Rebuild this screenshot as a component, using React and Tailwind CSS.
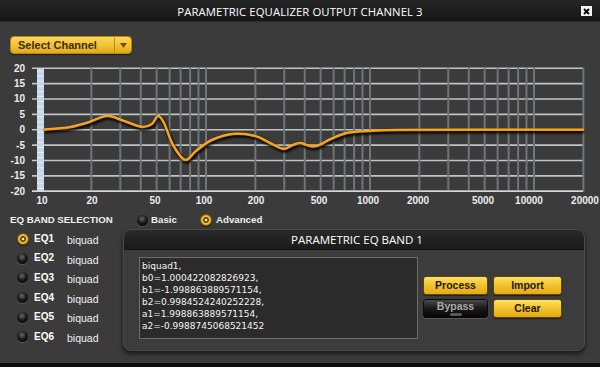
import React from "react";

const X0 = 42;
const DEC = 164;
const fx = (f) => X0 + DEC * Math.log10(f / 10);
const dy = (d) => 129.7 - d * 3.075;

const gridFreqs = [];
for (let f = 20; f <= 100; f += 10) gridFreqs.push(f);
for (let f = 200; f <= 1000; f += 100) gridFreqs.push(f);
for (let f = 2000; f <= 10000; f += 1000) gridFreqs.push(f);
gridFreqs.push(20000);

const dbs = [20, 15, 10, 5, 0, -5, -10, -15, -20];
const xLabels = [
  ["10", 42],
  ["20", 92],
  ["50", 155],
  ["100", 204],
  ["200", 256],
  ["500", 319],
  ["1000", 368],
  ["2000", 418],
  ["5000", 483],
  ["10000", 529],
  ["20000", 585],
];

const pts = [
  [44, 129.5], [68, 127.5], [88, 122.5], [107, 116], [124, 121], [142, 127],
  [152, 124], [158, 116], [164, 123], [173, 145], [185, 160], [196, 151],
  [212, 140], [233, 134], [255, 136], [270, 143], [283, 149], [292, 145.5],
  [300, 143], [308, 145.5], [317, 146], [331, 139], [347, 133], [370, 131],
  [400, 130], [480, 129.8], [583, 129.8],
];

function curvePath(p) {
  let d = `M${p[0][0]},${p[0][1]}`;
  for (let i = 0; i < p.length - 1; i++) {
    const a = p[i - 1] || p[i];
    const b = p[i];
    const c = p[i + 1];
    const e = p[i + 2] || c;
    const c1 = [b[0] + (c[0] - a[0]) / 6, b[1] + (c[1] - a[1]) / 6];
    const c2 = [c[0] - (e[0] - b[0]) / 6, c[1] - (e[1] - b[1]) / 6];
    d += ` C${c1[0].toFixed(2)},${c1[1].toFixed(2)} ${c2[0].toFixed(2)},${c2[1].toFixed(2)} ${c[0]},${c[1]}`;
  }
  return d;
}

function Chart() {
  const d = curvePath(pts);
  return (
    <svg width="600" height="154" viewBox="0 54 600 154" className="block">
      <defs>
        <filter id="sh" x="-5%" y="-20%" width="110%" height="140%">
          <feGaussianBlur stdDeviation="1.2" />
        </filter>
      </defs>
      {dbs.map((v) => (
        <line key={v} x1="32" x2="583" y1={dy(v)} y2={dy(v)} stroke="#c2c4c4" strokeWidth="1.6" />
      ))}
      {gridFreqs.map((f) => (
        <line key={f} x1={fx(f)} x2={fx(f)} y1="68" y2="191.5" stroke="#6e7677" strokeWidth="2" />
      ))}
      <rect x="37" y="68" width="7" height="124" fill="#c6d6e8" />
      {Array.from({ length: 24 }).map((_, i) => (
        <line key={i} x1="37" x2="44" y1={71 + i * 5.1} y2={71 + i * 5.1} stroke="#eef3f8" strokeWidth="0.8" />
      ))}
      <line x1="32" x2="583" y1="191.2" y2="191.2" stroke="#d4d6d6" strokeWidth="1.6" />
      {dbs.map((v) => (
        <text
          key={v}
          x="25"
          y={dy(v)}
          textAnchor="end"
          dominantBaseline="central"
          fill="#ececec"
          fontSize="10"
          fontWeight="700"
          fontFamily="'Liberation Sans', Arial, sans-serif"
        >
          {v}
        </text>
      ))}
      {xLabels.map(([t, x]) => (
        <text
          key={t}
          x={x}
          y="200"
          textAnchor="middle"
          dominantBaseline="central"
          fill="#ececec"
          fontSize="10"
          fontWeight="700"
          fontFamily="'Liberation Sans', Arial, sans-serif"
        >
          {t}
        </text>
      ))}
      <path d={d} fill="none" stroke="#000" strokeOpacity="0.85" strokeWidth="4" transform="translate(1,1.8)" filter="url(#sh)" />
      <path d={d} fill="none" stroke="#f39a12" strokeWidth="2.6" strokeLinecap="round" strokeLinejoin="round" />
      <path d={d} fill="none" stroke="#ffc050" strokeWidth="0.8" strokeOpacity="0.6" transform="translate(0,-0.6)" />
    </svg>
  );
}

function Radio({ on }) {
  return on ? (
    <span className="block w-[12px] h-[12px] rounded-full border border-[#7a5a08] bg-[radial-gradient(circle,#fff1a8_0,#fff1a8_16%,#5d4104_24%,#5d4104_36%,#f6c232_46%,#d8900c_100%)] shadow-[0_1px_1px_rgba(0,0,0,0.6)]" />
  ) : (
    <span className="block w-[11px] h-[11px] rounded-full bg-[radial-gradient(circle_at_45%_35%,#6a6a6a_0,#1a1a1a_45%,#000_100%)] shadow-[0_1px_1px_rgba(255,255,255,0.15)]" />
  );
}

function YBtn({ children, w }) {
  return (
    <div
      className={`${w} h-[19px] flex items-center justify-center rounded-[3px] border border-[#5e4508] bg-[linear-gradient(#fde06a,#f2c22c_50%,#e6aa14)] text-[10.5px] font-bold text-[#1e1602] shadow-[0_1px_1px_rgba(0,0,0,0.5)]`}
    >
      {children}
    </div>
  );
}

export default function App() {
  const eqs = ["EQ1", "EQ2", "EQ3", "EQ4", "EQ5", "EQ6"];
  return (
    <div className="w-[600px] h-[367px] overflow-hidden flex flex-col bg-[#3b3b3b] font-['Liberation_Sans',Arial,sans-serif]">
      {/* title bar */}
      <div className="relative h-[22px] shrink-0 flex items-center justify-center bg-[linear-gradient(#262626,#161616)] border-b border-[#2c2c2c]">
        <span className="text-[11.3px] text-white tracking-[0.1px] font-['Open_Sans',sans-serif] leading-none pt-[2px]">
          PARAMETRIC EQUALIZER OUTPUT CHANNEL 3
        </span>
        <div className="absolute right-[8px] top-[6px] w-[11px] h-[10px] bg-[#f2f2f2] flex items-center justify-center">
          <svg width="7" height="7" viewBox="0 0 7 7">
            <path d="M1 1L6 6M6 1L1 6" stroke="#000" strokeWidth="1.8" />
          </svg>
        </div>
      </div>

      {/* select channel */}
      <div className="h-[32px] shrink-0 flex items-end pl-[10px]">
        <div className="w-[122px] h-[18px] flex items-center rounded-[4px] border border-[#b58910] bg-[linear-gradient(#fbd75a,#f1c232_55%,#e2a916)] shadow-[0_1px_1px_rgba(0,0,0,0.5)]">
          <span className="flex-1 pl-[7px] text-[11px] font-bold text-[#3a2b04] leading-none">Select Channel</span>
          <span className="w-px h-[14px] bg-[#b88c14]" />
          <span className="w-[16px] flex justify-center">
            <svg width="7" height="5" viewBox="0 0 7 5">
              <path d="M0 0H7L3.5 5Z" fill="#6a4f0c" />
            </svg>
          </span>
        </div>
      </div>

      {/* chart */}
      <Chart />

      {/* EQ band selection row */}
      <div className="h-[18px] mt-[3px] shrink-0 flex items-center text-[9.7px] font-bold text-[#eeeeee]">
        <span className="pl-[10px] w-[137px]">EQ BAND SELECTION</span>
        <Radio on={false} />
        <span className="ml-[3px] w-[49px]">Basic</span>
        <Radio on />
        <span className="ml-[4px]">Advanced</span>
      </div>

      {/* lower section */}
      <div className="flex shrink-0">
        <div className="w-[123px] flex flex-col">
          {eqs.map((e, i) => (
            <div key={e} className="h-[19.6px] flex items-center pl-[16px]">
              <span className="w-[13px] flex justify-center">
                <Radio on={i === 0} />
              </span>
              <span className="ml-[5px] w-[33px] text-[10px] font-bold text-white leading-none">{e}</span>
              <span className="text-[10.5px] text-[#f0f0f0] leading-none pt-[3px]">biquad</span>
            </div>
          ))}
        </div>

        <div className="w-[462px] h-[122px] flex flex-col rounded-[8px] bg-[#3c3c3c] border border-[#4a4a4a] shadow-[0_3px_5px_rgba(0,0,0,0.6)]">
          <div className="h-[20px] shrink-0 flex items-center justify-center rounded-t-[7px] bg-[linear-gradient(#2a2a2a,#1a1a1a)] border-b border-[#111]">
            <span className="text-[11.5px] text-white font-['Open_Sans',sans-serif] leading-none pl-[6px]">
              PARAMETRIC EQ BAND 1
            </span>
          </div>
          <div className="flex pl-[15px] pt-[7px]">
            <div className="w-[279px] h-[82px] bg-[#2b2b2b] border border-[#6d6d6d] pl-[2px] pt-[2px] font-['DejaVu_Sans',sans-serif] text-[9px] leading-[12px] text-[#f4f4f4]">
              <div>biquad1,</div>
              <div>b0=1.000422082826923,</div>
              <div>b1=-1.998863889571154,</div>
              <div>b2=0.9984524240252228,</div>
              <div>a1=1.998863889571154,</div>
              <div>a2=-0.9988745068521452</div>
            </div>
            <div className="ml-[5px] pt-[19px] grid grid-cols-[65px_69px] gap-x-[5px] gap-y-[4px] h-fit">
              <YBtn w="w-[65px]">Process</YBtn>
              <YBtn w="w-[69px]">Import</YBtn>
              <div className="w-[65px] h-[19px] flex flex-col items-center justify-center rounded-[3px] border border-[#0a0a0a] bg-[linear-gradient(#4a4a4a,#1c1c1c_45%,#050505)] shadow-[0_1px_1px_rgba(255,255,255,0.15)]">
                <span className="text-[10.5px] font-bold text-[#a9a9a9] leading-none">Bypass</span>
                <span className="mt-[1px] w-[12px] h-[3px] rounded-[2px] bg-[#5a5a5a]" />
              </div>
              <YBtn w="w-[69px]">Clear</YBtn>
            </div>
          </div>
        </div>
      </div>

      <div className="flex-1" />
      <div className="h-[4px] shrink-0 bg-[#0c0c0c]" />
    </div>
  );
}
